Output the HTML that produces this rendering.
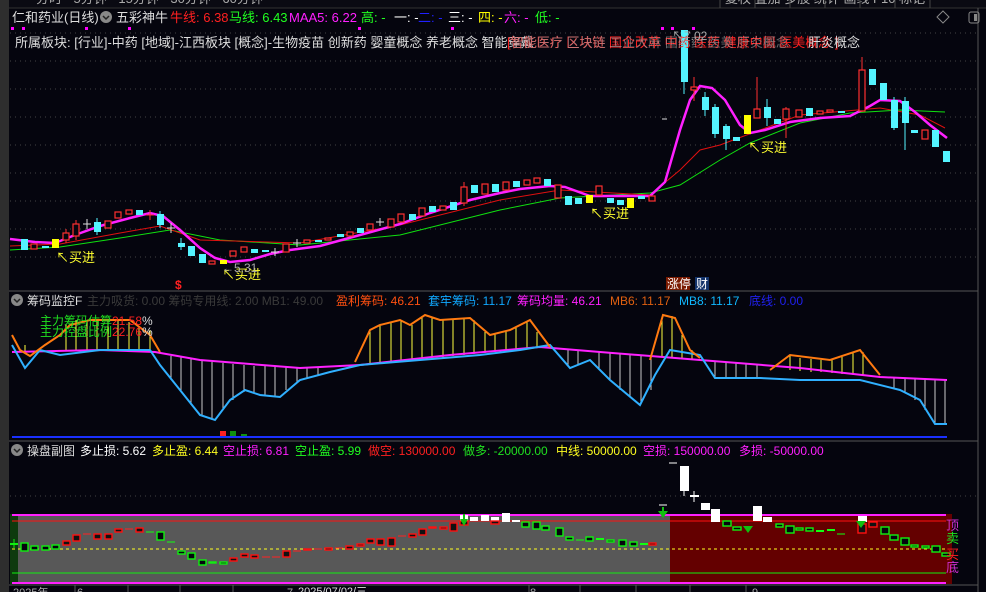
<!DOCTYPE html>
<html><head><meta charset="utf-8"><style>
html,body{margin:0;padding:0;background:#05050e;width:986px;height:592px;overflow:hidden}
svg{display:block;font-family:"Liberation Sans","Noto Sans CJK SC",sans-serif}
.r{fill:#05050e;stroke:#ff3030;stroke-width:1.2}
.c{fill:#54f4ff}
.y{fill:#ffff00}
.w{stroke:#ddd;stroke-width:1}
.rw{stroke:#ff3030;stroke-width:1}
.cw{stroke:#54f4ff;stroke-width:1}
.g{fill:#05050e;stroke:#10f010;stroke-width:1.4}
.gr{fill:#111;stroke:#ff1010;stroke-width:1.4}
.wf{fill:#fff}
</style></head><body>
<svg width="986" height="592" viewBox="0 0 986 592" xmlns="http://www.w3.org/2000/svg">
<rect width="986" height="592" fill="#05050e"/>
<rect x="0" y="0" width="9" height="592" fill="#2e2e2e"/>
<rect x="9" y="0" width="977" height="8" fill="#0a0a12"/>
<line x1="9" y1="8" x2="986" y2="8" stroke="#333"/>
<g fill="#aaa" font-size="13"><text x="36" y="3">分时 · 5分钟 · 15分钟 · 30分钟 · 60分钟</text><text x="725" y="3">复权 叠加 多股 统计 画线 F10 标记</text></g>
<g stroke="#444"><line x1="720" y1="0" x2="720" y2="8"/><line x1="755" y1="0" x2="755" y2="8"/><line x1="790" y1="0" x2="790" y2="8"/><line x1="825" y1="0" x2="825" y2="8"/><line x1="860" y1="0" x2="860" y2="8"/><line x1="895" y1="0" x2="895" y2="8"/><line x1="930" y1="0" x2="930" y2="8"/></g>
<line x1="978" y1="8" x2="978" y2="592" stroke="#555"/>
<g stroke="#444" stroke-dasharray="1,4">
<line x1="10" y1="33" x2="978" y2="33"/><line x1="10" y1="61" x2="978" y2="61"/><line x1="10" y1="89" x2="978" y2="89"/><line x1="10" y1="117" x2="978" y2="117"/><line x1="10" y1="145" x2="978" y2="145"/><line x1="10" y1="173" x2="978" y2="173"/><line x1="10" y1="201" x2="978" y2="201"/><line x1="10" y1="229" x2="978" y2="229"/><line x1="10" y1="257" x2="978" y2="257"/>
<line x1="10" y1="496" x2="978" y2="496"/>
</g>
<g font-size="13">
<text x="12" y="22" fill="#ddd">仁和药业(日线)</text>
<circle cx="106" cy="17" r="6" fill="#888"/><path d="M103 16l3 3 3-3" stroke="#222" stroke-width="1.5" fill="none"/>
<text x="116" y="22" fill="#ddd">五彩神牛</text>
<text x="170" y="22" fill="#ff2020">牛线: 6.38</text>
<text x="229" y="22" fill="#20ff20">马线: 6.43</text>
<text x="289" y="22" fill="#ff20ff">MAA5: 6.22</text>
<text x="361" y="22" fill="#20ff20">高: -</text>
<text x="394" y="22" fill="#fff">一: -</text>
<text x="418" y="22" fill="#2020ff">二: -</text>
<text x="448" y="22" fill="#fff">三: -</text>
<text x="478" y="22" fill="#ffff00">四: -</text>
<text x="504" y="22" fill="#ff20ff">六: -</text>
<text x="535" y="22" fill="#20ff20">低: -</text>
</g>
<g fill="#ff00ff"><rect x="11" y="27" width="3" height="3"/><rect x="22" y="27" width="3" height="3"/><rect x="85" y="27" width="3" height="3"/><rect x="128" y="27" width="3" height="3"/><rect x="358" y="27" width="3" height="3"/><rect x="451" y="27" width="3" height="3"/><rect x="661" y="27" width="3" height="3"/><rect x="671" y="27" width="3" height="3"/><rect x="692" y="27" width="3" height="3"/></g>
<path d="M943 11l6 6-6 6-6-6z" fill="none" stroke="#888"/>
<rect x="969" y="12" width="10" height="11" rx="2" fill="none" stroke="#888"/><rect x="974" y="14" width="3" height="7" fill="#888"/>
<polyline fill="none" stroke="#10e010" stroke-width="1" points="10,250 60,247 120,238 170,230 220,240 300,245 400,235 500,210 560,198 650,193 680,185 720,160 750,143 800,123 850,113 900,110 945,112"/>
<polyline fill="none" stroke="#e01010" stroke-width="1" points="10,246 60,244 120,233 160,226 200,240 300,243 400,225 500,200 560,190 650,195 680,170 700,150 720,145 760,130 800,115 880,108 920,115 945,128"/>
<polyline fill="none" stroke="#ff20ff" stroke-width="2.5" points="10,239 35,242 55,243 75,235 100,226 130,218 150,213 163,216 180,230 200,248 215,258 230,262 250,260 270,254 290,250 320,246 360,235 400,224 430,213 470,200 500,193 520,189 550,186 565,187 590,196 620,196 650,196 665,182 680,130 690,100 700,86 712,88 725,100 740,125 750,133 765,130 790,122 820,118 850,116 870,106 880,100 900,101 915,112 930,125 947,138"/>
<g>
<rect class="c" x="21" y="239" width="7" height="11"/>
<rect class="r" x="31" y="244" width="6" height="5"/>
<rect class="c" x="42" y="246" width="7" height="2"/>
<rect class="y" x="52" y="239" width="7" height="9"/>
<line class="rw" x1="66" y1="229" x2="66" y2="243"/><rect class="r" x="63" y="233" width="6" height="7"/>
<line class="rw" x1="76" y1="220" x2="76" y2="240"/><rect class="r" x="73" y="224" width="6" height="12"/>
<line class="w" x1="87" y1="219" x2="87" y2="229"/><line class="w" x1="83" y1="224" x2="91" y2="224"/>
<line class="cw" x1="97" y1="218" x2="97" y2="235"/><rect class="c" x="94" y="222" width="7" height="10"/>
<rect class="r" x="105" y="221" width="6" height="7"/>
<rect class="r" x="115" y="212" width="6" height="6"/>
<rect class="r" x="126" y="210" width="6" height="4"/>
<rect class="c" x="136" y="210" width="7" height="5"/>
<line class="rw" x1="150" y1="210" x2="150" y2="220"/><line class="rw" x1="146" y1="215" x2="154" y2="215"/>
<line class="cw" x1="160" y1="211" x2="160" y2="228"/><rect class="c" x="157" y="214" width="7" height="11"/>
<line class="w" x1="171" y1="223" x2="171" y2="233"/><line class="w" x1="167" y1="228" x2="175" y2="228"/>
<line class="cw" x1="181" y1="238" x2="181" y2="250"/><rect class="c" x="178" y="243" width="7" height="4"/>
<rect class="c" x="188" y="246" width="7" height="10"/>
<rect class="c" x="199" y="254" width="7" height="9"/>
<rect class="r" x="209" y="261" width="6" height="3"/>
<rect class="y" x="220" y="260" width="7" height="4"/>
<rect class="r" x="230" y="251" width="6" height="5"/>
<rect class="r" x="241" y="247" width="6" height="5"/>
<rect class="c" x="251" y="249" width="7" height="4"/>
<rect class="c" x="262" y="250" width="7" height="2"/>
<line class="w" x1="275" y1="248" x2="275" y2="256"/><line class="w" x1="271" y1="252" x2="279" y2="252"/>
<rect class="r" x="283" y="244" width="6" height="8"/>
<line class="w" x1="297" y1="239" x2="297" y2="247"/><line class="w" x1="293" y1="243" x2="301" y2="243"/>
<rect class="r" x="304" y="240" width="6" height="3"/>
<rect class="c" x="315" y="240" width="7" height="2"/>
<rect class="r" x="325" y="238" width="6" height="2"/>
<rect class="c" x="337" y="234" width="7" height="3"/>
<rect class="r" x="347" y="232" width="6" height="4"/>
<rect class="c" x="357" y="228" width="7" height="5"/>
<rect class="r" x="367" y="224" width="6" height="6"/>
<line class="w" x1="380" y1="218" x2="380" y2="226"/><line class="w" x1="376" y1="222" x2="384" y2="222"/>
<rect class="r" x="388" y="219" width="6" height="8"/>
<rect class="r" x="398" y="214" width="6" height="8"/>
<rect class="c" x="409" y="214" width="7" height="6"/>
<rect class="r" x="419" y="208" width="6" height="8"/>
<rect class="c" x="429" y="206" width="7" height="6"/>
<rect class="r" x="440" y="206" width="6" height="4"/>
<rect class="c" x="450" y="202" width="7" height="8"/>
<line class="rw" x1="464" y1="182" x2="464" y2="206"/><rect class="r" x="461" y="187" width="6" height="16"/>
<rect class="c" x="471" y="185" width="7" height="8"/>
<rect class="r" x="482" y="184" width="6" height="10"/>
<rect class="c" x="492" y="184" width="7" height="8"/>
<rect class="r" x="503" y="182" width="6" height="8"/>
<rect class="c" x="513" y="181" width="7" height="6"/>
<rect class="r" x="524" y="180" width="6" height="5"/>
<rect class="r" x="534" y="178" width="6" height="5"/>
<rect class="c" x="544" y="179" width="7" height="7"/>
<rect class="r" x="555" y="185" width="6" height="13"/>
<rect class="c" x="565" y="196" width="7" height="9"/>
<rect class="c" x="575" y="198" width="7" height="6"/>
<rect class="y" x="586" y="195" width="7" height="8"/>
<rect class="r" x="596" y="186" width="6" height="9"/>
<rect class="c" x="607" y="198" width="7" height="5"/>
<rect class="c" x="617" y="200" width="7" height="5"/>
<rect class="y" x="627" y="198" width="7" height="10"/>
<rect class="c" x="638" y="196" width="7" height="3"/>
<rect class="r" x="649" y="196" width="6" height="5"/>
<line class="cw" x1="684" y1="30" x2="684" y2="94"/><rect class="c" x="681" y="30" width="7" height="52"/>
<line class="w" x1="662" y1="119" x2="667" y2="119"/>
<line class="rw" x1="694" y1="77" x2="694" y2="101"/><rect class="r" x="691" y="87" width="6" height="3"/>
<line class="cw" x1="705" y1="92" x2="705" y2="116"/><rect class="c" x="702" y="97" width="7" height="13"/>
<line class="cw" x1="715" y1="104" x2="715" y2="138"/><rect class="c" x="712" y="107" width="7" height="27"/>
<line class="cw" x1="726" y1="124" x2="726" y2="150"/><rect class="c" x="723" y="126" width="7" height="13"/>
<rect class="c" x="733" y="137" width="7" height="4"/>
<rect class="y" x="744" y="115" width="7" height="19"/>
<line class="rw" x1="757" y1="77" x2="757" y2="118"/><rect class="r" x="754" y="109" width="6" height="9"/>
<line class="cw" x1="767" y1="99" x2="767" y2="126"/><rect class="c" x="764" y="107" width="7" height="11"/>
<rect class="c" x="774" y="119" width="7" height="5"/>
<line class="rw" x1="786" y1="107" x2="786" y2="138"/><rect class="r" x="783" y="109" width="6" height="10"/>
<rect class="r" x="796" y="110" width="6" height="7"/>
<rect class="c" x="806" y="108" width="7" height="8"/>
<rect class="r" x="817" y="111" width="6" height="3"/>
<rect class="r" x="827" y="110" width="6" height="2"/>
<rect class="c" x="838" y="111" width="7" height="2"/>
<line class="rw" x1="862" y1="57" x2="862" y2="112"/><rect class="r" x="859" y="70" width="6" height="41"/>
<rect class="c" x="869" y="69" width="7" height="16"/>
<rect class="c" x="880" y="83" width="7" height="17"/>
<line class="cw" x1="894" y1="97" x2="894" y2="130"/><rect class="c" x="891" y="100" width="7" height="28"/>
<line class="cw" x1="905" y1="97" x2="905" y2="150"/><rect class="c" x="902" y="101" width="7" height="22"/>
<rect class="c" x="911" y="130" width="7" height="3"/>
<rect class="r" x="922" y="130" width="6" height="9"/>
<rect class="c" x="932" y="130" width="7" height="17"/>
<rect class="c" x="943" y="151" width="7" height="11"/>
</g>
<text x="15" y="47" font-size="13" fill="#ddd">所属板块: [行业]-中药 [地域]-江西板块 [概念]-生物疫苗 创新药 婴童概念 养老概念 智能穿戴</text>
<text x="507" y="47" font-size="13" fill="#ff2020">[智能医疗 区块链 国企改革 中药 医药 健康中国 医美概念 ]</text>
<text x="511" y="47" font-size="13" fill="#aaa" opacity="0.6">智能医疗 区块链 工业大麻 国际药 医美 肝炎概念</text>
<text x="808" y="47" font-size="13" fill="#ddd">肝炎概念</text>
<g font-size="13" fill="#ffff30">
<text x="56" y="262">↖买进</text><text x="222" y="279">↖买进</text><text x="590" y="218">↖买进</text><text x="748" y="152">↖买进</text>
</g>
<text x="222" y="272" font-size="12" fill="#aaa">←5.31</text>
<text x="672" y="40" font-size="12" fill="#aaa">↖7.02</text>
<text x="175" y="289" font-size="12" fill="#ff2020" font-weight="bold">$</text>
<rect x="666" y="277" width="24" height="13" fill="#7a1a00"/><text x="667" y="288" font-size="12" fill="#fff">涨停</text>
<rect x="695" y="277" width="14" height="13" fill="#13336a"/><text x="696" y="288" font-size="12" fill="#fff">财</text>
<line x1="9" y1="291" x2="978" y2="291" stroke="#555"/>
<g font-size="12">
<circle cx="17" cy="300" r="6" fill="#888"/><path d="M14 299l3 3 3-3" stroke="#222" stroke-width="1.5" fill="none"/>
<text x="27" y="305" fill="#ddd">筹码监控F</text>
<text x="87" y="305" fill="#3a3a3a">主力吸货: 0.00 筹码专用线: 2.00 MB1: 49.00</text>
<text x="336" y="305" fill="#ff5010">盈利筹码: 46.21</text>
<text x="428" y="305" fill="#10a8ff">套牢筹码: 11.17</text>
<text x="517" y="305" fill="#ff20ff">筹码均量: 46.21</text>
<text x="610" y="305" fill="#e06010">MB6: 11.17</text>
<text x="679" y="305" fill="#10b8ff">MB8: 11.17</text>
<text x="749" y="305" fill="#2020ee">底线: 0.00</text>
</g>
<g stroke="#ffff40" stroke-width="1">
<line x1="25" y1="352" x2="25" y2="345"/><line x1="66" y1="350" x2="66" y2="324"/><line x1="76" y1="350" x2="76" y2="320"/><line x1="87" y1="350" x2="87" y2="320"/><line x1="97" y1="350" x2="97" y2="320"/><line x1="108" y1="350" x2="108" y2="320"/><line x1="118" y1="350" x2="118" y2="320"/><line x1="129" y1="350" x2="129" y2="322"/><line x1="139" y1="350" x2="139" y2="326"/><line x1="150" y1="352" x2="150" y2="330"/>
<line x1="370" y1="364" x2="370" y2="330"/><line x1="380" y1="363" x2="380" y2="325"/><line x1="391" y1="362" x2="391" y2="322"/><line x1="401" y1="361" x2="401" y2="320"/><line x1="412" y1="360" x2="412" y2="325"/><line x1="422" y1="360" x2="422" y2="316"/><line x1="432" y1="359" x2="432" y2="318"/><line x1="443" y1="358" x2="443" y2="320"/><line x1="453" y1="356" x2="453" y2="319"/><line x1="464" y1="355" x2="464" y2="318"/><line x1="474" y1="354" x2="474" y2="320"/><line x1="485" y1="353" x2="485" y2="332"/><line x1="495" y1="352" x2="495" y2="334"/><line x1="506" y1="351" x2="506" y2="331"/><line x1="516" y1="350" x2="516" y2="328"/><line x1="527" y1="349" x2="527" y2="322"/><line x1="537" y1="348" x2="537" y2="332"/>
<line x1="662" y1="357" x2="662" y2="318"/><line x1="672" y1="358" x2="672" y2="316"/><line x1="682" y1="358" x2="682" y2="335"/><line x1="692" y1="359" x2="692" y2="350"/>
<line x1="790" y1="370" x2="790" y2="356"/><line x1="800" y1="371" x2="800" y2="358"/><line x1="811" y1="372" x2="811" y2="359"/><line x1="821" y1="372" x2="821" y2="360"/><line x1="832" y1="373" x2="832" y2="360"/><line x1="842" y1="374" x2="842" y2="357"/><line x1="853" y1="375" x2="853" y2="353"/><line x1="863" y1="375" x2="863" y2="352"/>
</g>
<g stroke="#cccccc" stroke-width="1">
<line x1="171" y1="356" x2="171" y2="380"/><line x1="181" y1="357" x2="181" y2="392"/><line x1="191" y1="359" x2="191" y2="405"/><line x1="202" y1="360" x2="202" y2="415"/><line x1="212" y1="362" x2="212" y2="420"/><line x1="223" y1="363" x2="223" y2="410"/><line x1="233" y1="364" x2="233" y2="400"/><line x1="244" y1="365" x2="244" y2="392"/><line x1="254" y1="366" x2="254" y2="393"/><line x1="265" y1="366" x2="265" y2="395"/><line x1="275" y1="367" x2="275" y2="397"/><line x1="286" y1="367" x2="286" y2="390"/><line x1="297" y1="368" x2="297" y2="382"/><line x1="307" y1="368" x2="307" y2="378"/><line x1="318" y1="368" x2="318" y2="375"/>
<line x1="568" y1="350" x2="568" y2="366"/><line x1="578" y1="351" x2="578" y2="364"/><line x1="599" y1="352" x2="599" y2="368"/><line x1="610" y1="353" x2="610" y2="380"/><line x1="620" y1="354" x2="620" y2="390"/><line x1="630" y1="355" x2="630" y2="397"/><line x1="641" y1="356" x2="641" y2="404"/><line x1="651" y1="357" x2="651" y2="390"/>
<line x1="715" y1="361" x2="715" y2="378"/><line x1="726" y1="362" x2="726" y2="378"/><line x1="736" y1="363" x2="736" y2="378"/><line x1="746" y1="364" x2="746" y2="378"/><line x1="757" y1="365" x2="757" y2="378"/>
<line x1="894" y1="378" x2="894" y2="388"/><line x1="905" y1="378" x2="905" y2="393"/><line x1="915" y1="379" x2="915" y2="400"/><line x1="925" y1="379" x2="925" y2="410"/><line x1="935" y1="379" x2="935" y2="423"/><line x1="945" y1="380" x2="945" y2="424"/>
</g>
<polyline fill="none" stroke="#ff20ff" stroke-width="2" points="12,352 100,350 155,352 200,360 300,368 360,365 450,355 540,347 600,352 700,360 800,368 880,377 947,380"/>
<polyline fill="none" stroke="#30b0ff" stroke-width="2" points="12,345 25,368 40,350 60,355 100,350 150,350 160,365 180,390 200,415 215,420 230,400 245,390 260,395 280,397 300,380 330,372 360,365 420,360 480,355 520,350 550,345 570,368 590,360 610,380 640,405 655,375 670,350 700,355 715,378 760,378 800,380 860,380 900,390 920,400 935,424 947,424"/>
<g fill="none" stroke="#ff7a10" stroke-width="2">
<polyline points="12,335 20,350 30,356 45,345 60,335 70,325 90,320 130,320 150,335 160,352"/>
<polyline points="355,362 370,330 380,325 400,320 410,325 425,315 440,320 470,318 490,335 510,330 530,320 550,347"/>
<polyline points="650,360 663,315 675,318 690,350 700,358"/>
<polyline points="770,370 790,355 830,360 860,350 880,375"/>
</g>
<text x="40" y="325" font-size="12" fill="#20e020">主力筹码估算</text><text x="112" y="325" font-size="12" fill="#ff2020">21.58</text><text x="142" y="325" font-size="12" fill="#ddd">%</text>
<text x="40" y="336" font-size="12" fill="#20e020">主力控盘比例</text><text x="112" y="336" font-size="12" fill="#ff2020">22.76</text><text x="142" y="336" font-size="12" fill="#ddd">%</text>
<line x1="12" y1="437" x2="947" y2="437" stroke="#1a30ff" stroke-width="2"/>
<rect x="220" y="431" width="6" height="5" fill="#ff2020"/><rect x="230" y="431" width="6" height="5" fill="#109010"/><rect x="241" y="434" width="6" height="2" fill="#109010"/>
<line x1="9" y1="441" x2="978" y2="441" stroke="#555"/>
<g font-size="12">
<circle cx="17" cy="450" r="6" fill="#888"/><path d="M14 449l3 3 3-3" stroke="#222" stroke-width="1.5" fill="none"/>
<text x="27" y="455" fill="#ddd">操盘副图</text>
<text x="80" y="455" fill="#fff">多止损: 5.62</text>
<text x="152" y="455" fill="#ffff20">多止盈: 6.44</text>
<text x="223" y="455" fill="#ff20ff">空止损: 6.81</text>
<text x="295" y="455" fill="#20ff20">空止盈: 5.99</text>
<text x="368" y="455" fill="#ff2020">做空: 130000.00</text>
<text x="463" y="455" fill="#20e020">做多: -20000.00</text>
<text x="556" y="455" fill="#ffff20">中线: 50000.00</text>
<text x="643" y="455" fill="#ff20ff">空损: 150000.00</text>
<text x="739" y="455" fill="#ff20ff">多损: -50000.00</text>
</g>
<rect x="10" y="514" width="8" height="70" fill="#0e3a0e"/>
<rect x="18" y="514" width="652" height="70" fill="#585858"/>
<rect x="670" y="514" width="282" height="70" fill="#640000"/>
<line x1="12" y1="515" x2="946" y2="515" stroke="#ff20ff" stroke-width="2"/>
<line x1="12" y1="583" x2="946" y2="583" stroke="#ff20ff" stroke-width="2"/>
<line x1="12" y1="521" x2="946" y2="521" stroke="#ff1010"/>
<line x1="12" y1="549" x2="946" y2="549" stroke="#ffff20" stroke-dasharray="3,3"/>
<line x1="12" y1="573" x2="946" y2="573" stroke="#10f010"/>
<g>
<line x1="10" y1="544" x2="18" y2="544" stroke="#10f010" stroke-width="2"/><line x1="14" y1="539" x2="14" y2="548" stroke="#10f010"/>
<rect class="g" x="21" y="543" width="7" height="8"/><rect class="g" x="31" y="546" width="7" height="4"/><rect class="g" x="42" y="546" width="7" height="4"/><rect class="g" x="52" y="545" width="7" height="4"/>
<rect class="gr" x="63" y="541" width="7" height="4"/><rect class="gr" x="73" y="535" width="7" height="6"/><line x1="83" y1="534" x2="91" y2="534" stroke="#f22"/><rect class="gr" x="94" y="534" width="7" height="5"/><rect class="gr" x="105" y="534" width="7" height="5"/><rect class="gr" x="115" y="529" width="7" height="3"/><line x1="125" y1="529" x2="133" y2="529" stroke="#f22"/><rect class="gr" x="136" y="528" width="7" height="4"/>
<line x1="146" y1="532" x2="154" y2="532" stroke="#1f1"/><rect class="g" x="157" y="532" width="7" height="8"/><line x1="167" y1="542" x2="175" y2="542" stroke="#1f1"/>
<rect class="g" x="178" y="551" width="7" height="3"/><rect class="g" x="188" y="553" width="7" height="6"/><rect class="g" x="199" y="560" width="7" height="5"/><rect class="g" x="209" y="562" width="7" height="1"/><rect class="g" x="220" y="562" width="7" height="2"/>
<rect class="gr" x="230" y="558" width="7" height="3"/><rect class="gr" x="241" y="554" width="7" height="3"/><rect class="gr" x="251" y="555" width="7" height="3"/><line x1="262" y1="557" x2="270" y2="557" stroke="#f22"/><line x1="272" y1="557" x2="280" y2="557" stroke="#f22"/><rect class="gr" x="283" y="551" width="7" height="6"/><line x1="293" y1="551" x2="301" y2="551" stroke="#f22"/><rect class="gr" x="304" y="549" width="7" height="1"/><line x1="314" y1="549" x2="322" y2="549" stroke="#f22"/><rect class="gr" x="325" y="548" width="7" height="2"/><line x1="335" y1="548" x2="343" y2="548" stroke="#f22"/><rect class="gr" x="346" y="546" width="7" height="3"/><rect class="gr" x="357" y="544" width="7" height="2"/><rect class="gr" x="367" y="539" width="7" height="4"/><rect class="gr" x="377" y="539" width="7" height="6"/><rect class="gr" x="388" y="538" width="7" height="8"/><line x1="398" y1="536" x2="406" y2="536" stroke="#f22"/><rect class="gr" x="409" y="534" width="7" height="3"/><rect class="gr" x="419" y="529" width="7" height="6"/><rect class="gr" x="429" y="527" width="7" height="1"/><rect class="gr" x="440" y="527" width="7" height="2"/><rect class="gr" x="450" y="523" width="7" height="8"/>
<rect class="wf" x="460" y="515" width="8" height="6"/><rect class="gr" x="460" y="521" width="8" height="4"/><path d="M460 519h8l-4 7z" fill="#10c010"/><rect x="463" y="514" width="2" height="7" fill="#10c010"/>
<rect class="wf" x="470" y="517" width="8" height="4"/><rect class="wf" x="481" y="515" width="8" height="6"/><rect class="wf" x="491" y="517" width="8" height="4"/><rect class="gr" x="491" y="521" width="8" height="3"/><rect class="wf" x="502" y="513" width="8" height="9"/><rect class="wf" x="512" y="520" width="8" height="2"/>
<rect class="g" x="522" y="522" width="7" height="5"/><rect class="g" x="533" y="522" width="7" height="7"/><rect class="g" x="542" y="526" width="7" height="4"/><rect class="g" x="556" y="528" width="7" height="8"/><rect class="g" x="566" y="537" width="7" height="3"/><line x1="576" y1="540" x2="584" y2="540" stroke="#1f1"/><rect class="g" x="586" y="537" width="7" height="4"/><line x1="596" y1="539" x2="604" y2="539" stroke="#1f1" stroke-width="2"/><rect class="g" x="607" y="540" width="7" height="2"/><rect class="g" x="619" y="540" width="7" height="6"/><rect class="g" x="630" y="542" width="7" height="4"/><line x1="640" y1="544" x2="648" y2="544" stroke="#1f1" stroke-width="2"/><rect class="gr" x="649" y="543" width="7" height="2"/>
<line x1="659" y1="505" x2="667" y2="505" stroke="#fff"/><path d="M658 511h10l-5 7z" fill="#10c010"/><rect x="662" y="507" width="2" height="6" fill="#10c010"/>
<line x1="669" y1="463" x2="677" y2="463" stroke="#fff"/><rect class="wf" x="680" y="466" width="9" height="25"/><line x1="684" y1="490" x2="684" y2="496" stroke="#fff"/>
<line x1="690" y1="496" x2="699" y2="496" stroke="#fff" stroke-width="2"/><line x1="694" y1="491" x2="694" y2="502" stroke="#fff"/>
<rect class="wf" x="701" y="503" width="9" height="7"/><rect class="wf" x="711" y="509" width="9" height="13"/>
<rect class="g" x="723" y="521" width="8" height="5"/><rect class="g" x="733" y="527" width="8" height="3"/><path d="M743 526h10l-5 7z" fill="#10c010"/><rect class="wf" x="753" y="506" width="9" height="15"/><rect class="wf" x="763" y="517" width="9" height="5"/><rect class="g" x="776" y="524" width="7" height="3"/><rect class="g" x="786" y="526" width="8" height="7"/><rect class="g" x="796" y="528" width="7" height="2"/><rect class="g" x="806" y="528" width="7" height="3"/><line x1="816" y1="531" x2="824" y2="531" stroke="#1f1" stroke-width="2"/><line x1="827" y1="530" x2="835" y2="530" stroke="#1f1" stroke-width="2"/><line x1="837" y1="534" x2="845" y2="534" stroke="#1f1"/>
<rect class="wf" x="858" y="516" width="9" height="6"/><rect class="gr" x="858" y="524" width="8" height="9"/><path d="M856 521h10l-5 7z" fill="#10c010"/><rect class="gr" x="869" y="522" width="8" height="5"/>
<rect class="g" x="881" y="527" width="8" height="7"/><rect class="g" x="890" y="535" width="8" height="5"/><rect class="g" x="901" y="538" width="8" height="7"/><rect class="g" x="911" y="545" width="7" height="2"/><rect class="g" x="922" y="546" width="7" height="2"/><rect class="g" x="932" y="546" width="8" height="6"/><rect class="g" x="942" y="553" width="8" height="3"/>
</g>
<g font-size="13"><text x="946" y="530" fill="#d030d0">顶</text><text x="946" y="543" fill="#20e020">卖</text><text x="946" y="559" fill="#ff2020">买</text><text x="946" y="572" fill="#d030d0">底</text></g>
<line x1="9" y1="585" x2="978" y2="585" stroke="#555"/>
<g font-size="11" fill="#aaa"><text x="13" y="596">2025年</text><text x="77" y="596">6</text><text x="287" y="596">7</text><text x="298" y="595" fill="#ddd">2025/07/02/三</text><text x="530" y="596">8</text><text x="752" y="596">9</text></g>
<g stroke="#555"><line x1="75" y1="585" x2="75" y2="592"/><line x1="128" y1="585" x2="128" y2="592"/><line x1="180" y1="585" x2="180" y2="592"/><line x1="233" y1="585" x2="233" y2="592"/><line x1="529" y1="585" x2="529" y2="592"/><line x1="580" y1="585" x2="580" y2="592"/><line x1="636" y1="585" x2="636" y2="592"/><line x1="690" y1="585" x2="690" y2="592"/><line x1="746" y1="585" x2="746" y2="592"/></g>
</svg>
</body></html>
